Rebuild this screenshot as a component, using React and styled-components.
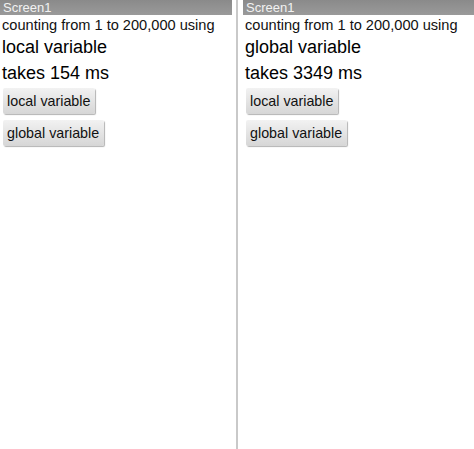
import React from "react";
import styled, { createGlobalStyle } from "styled-components";

const GlobalStyle = createGlobalStyle`
  html, body {
    margin: 0;
    padding: 0;
    background: #fff;
    font-family: "Liberation Sans", Arial, sans-serif;
  }
`;

const Page = styled.div`
  display: flex;
  width: 474px;
  height: 449px;
  background: #fff;
`;

const Panel = styled.div`
  display: flex;
  flex-direction: column;
  width: ${(props) => props.width}px;
  flex-shrink: 0;
`;

const Divider = styled.div`
  width: 2px;
  margin: 0 5px 0 4px;
  background: #c9c9c9;
`;

const TitleBar = styled.div`
  height: 15px;
  line-height: 15px;
  padding-left: 3px;
  font-size: 13px;
  color: #f2f2f2;
  background: linear-gradient(#8a8a8a, #9a9a9a);
`;

const Content = styled.div`
  display: flex;
  flex-direction: column;
  align-items: flex-start;
  padding: 1px 0 0 2px;
`;

const SmallText = styled.div`
  font-size: 14.6px;
  line-height: 18px;
  color: #111;
`;

const BigText = styled.div`
  font-size: 18px;
  line-height: 26px;
  color: #000;
`;

const Button = styled.button`
  margin: 2px 0 4px 1px;
  height: 26px;
  padding: 0 5px 0 4px;
  font-family: "Liberation Sans", Arial, sans-serif;
  font-size: 14.3px;
  color: #111;
  border: none;
  border-radius: 2px;
  background: linear-gradient(#f2f2f2, #d6d6d6);
  box-shadow: 1px 1px 1px rgba(0, 0, 0, 0.3);
  cursor: pointer;
`;

const Screen = ({ width, method, ms }) => (
  <Panel width={width}>
    <TitleBar>Screen1</TitleBar>
    <Content>
      <SmallText>counting from 1 to 200,000 using</SmallText>
      <BigText>{method}</BigText>
      <BigText>takes {ms} ms</BigText>
      <Button>local variable</Button>
      <Button>global variable</Button>
    </Content>
  </Panel>
);

export default function App() {
  return (
    <>
      <GlobalStyle />
      <Page>
        <Screen width={232} method="local variable" ms={154} />
        <Divider />
        <Screen width={231} method="global variable" ms={3349} />
      </Page>
    </>
  );
}
